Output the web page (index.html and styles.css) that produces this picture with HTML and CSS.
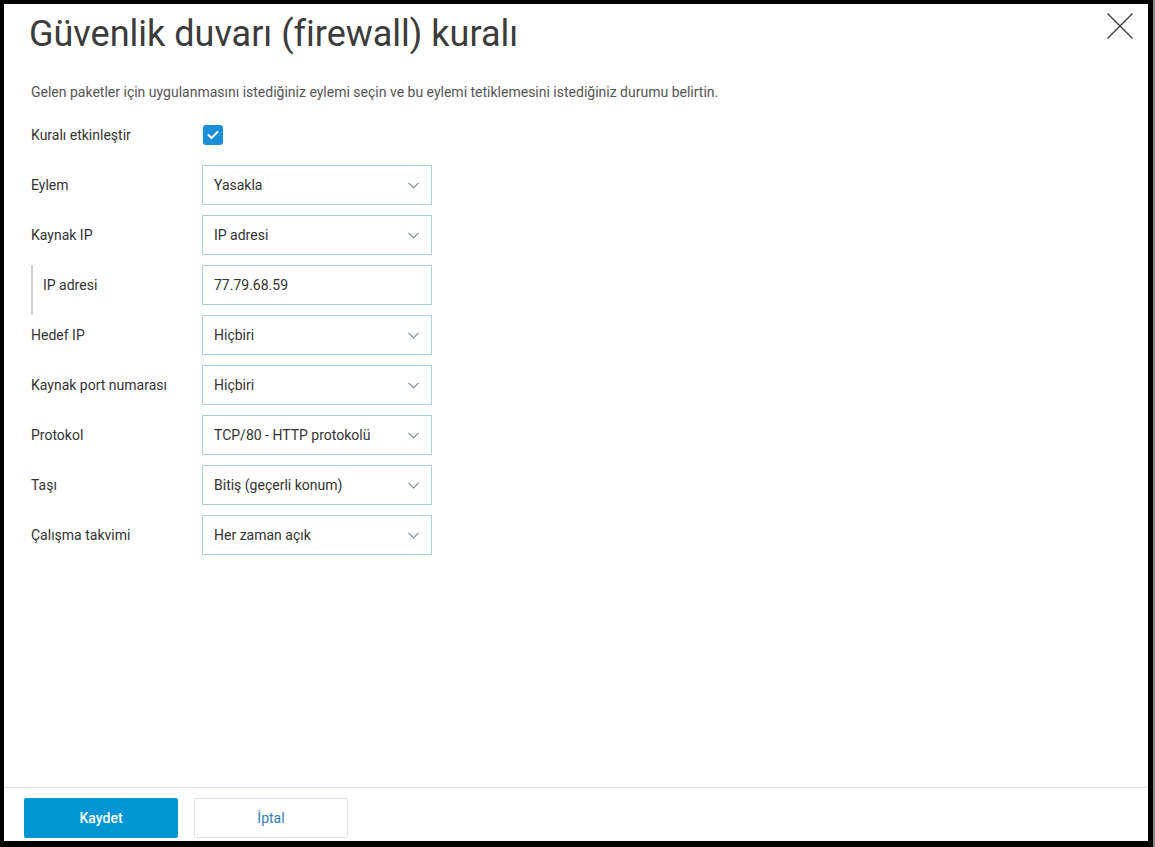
FILE: index.html
```html
<!DOCTYPE html>
<html lang="tr">
<head>
<meta charset="utf-8">
<title>Güvenlik duvarı (firewall) kuralı</title>
<link rel="stylesheet" href="styles.css">
</head>
<body>
<div class="dialog">
  <button class="close" aria-label="Kapat">
    <svg width="26" height="26" viewBox="0 0 26 26"><path d="M0.5 0.5 L25.5 25.5 M25.5 0.5 L0.5 25.5" stroke="#3a3a3a" stroke-width="1.3" fill="none"/></svg>
  </button>
  <div class="content">
    <h1 class="title">Güvenlik duvarı (firewall) kuralı</h1>
    <p class="desc">Gelen paketler için uygulanmasını istediğiniz eylemi seçin ve bu eylemi tetiklemesini istediğiniz durumu belirtin.</p>
    <div class="form">
      <div class="row">
        <div class="label">Kuralı etkinleştir</div>
        <div class="checkbox">
          <svg width="12" height="10" viewBox="0 0 12 10"><path d="M1.5 5 L4.5 8 L10.5 2" stroke="#fff" stroke-width="2" fill="none" stroke-linecap="round" stroke-linejoin="round"/></svg>
        </div>
      </div>
      <div class="row">
        <div class="label">Eylem</div>
        <div class="select"><span>Yasakla</span><svg class="chev" width="11" height="7" viewBox="0 0 11 7"><path d="M0.5 0.8 L5.5 5.8 L10.5 0.8" stroke="#7d8c99" stroke-width="1.2" fill="none"/></svg></div>
      </div>
      <div class="row">
        <div class="label">Kaynak IP</div>
        <div class="select"><span>IP adresi</span><svg class="chev" width="11" height="7" viewBox="0 0 11 7"><path d="M0.5 0.8 L5.5 5.8 L10.5 0.8" stroke="#7d8c99" stroke-width="1.2" fill="none"/></svg></div>
      </div>
      <div class="row sub">
        <div class="label">IP adresi</div>
        <div class="select input"><span>77.79.68.59</span></div>
      </div>
      <div class="row">
        <div class="label">Hedef IP</div>
        <div class="select"><span>Hiçbiri</span><svg class="chev" width="11" height="7" viewBox="0 0 11 7"><path d="M0.5 0.8 L5.5 5.8 L10.5 0.8" stroke="#7d8c99" stroke-width="1.2" fill="none"/></svg></div>
      </div>
      <div class="row">
        <div class="label">Kaynak port numarası</div>
        <div class="select"><span>Hiçbiri</span><svg class="chev" width="11" height="7" viewBox="0 0 11 7"><path d="M0.5 0.8 L5.5 5.8 L10.5 0.8" stroke="#7d8c99" stroke-width="1.2" fill="none"/></svg></div>
      </div>
      <div class="row">
        <div class="label">Protokol</div>
        <div class="select"><span>TCP/80 - HTTP protokolü</span><svg class="chev" width="11" height="7" viewBox="0 0 11 7"><path d="M0.5 0.8 L5.5 5.8 L10.5 0.8" stroke="#7d8c99" stroke-width="1.2" fill="none"/></svg></div>
      </div>
      <div class="row">
        <div class="label">Taşı</div>
        <div class="select"><span>Bitiş (geçerli konum)</span><svg class="chev" width="11" height="7" viewBox="0 0 11 7"><path d="M0.5 0.8 L5.5 5.8 L10.5 0.8" stroke="#7d8c99" stroke-width="1.2" fill="none"/></svg></div>
      </div>
      <div class="row">
        <div class="label">Çalışma takvimi</div>
        <div class="select"><span>Her zaman açık</span><svg class="chev" width="11" height="7" viewBox="0 0 11 7"><path d="M0.5 0.8 L5.5 5.8 L10.5 0.8" stroke="#7d8c99" stroke-width="1.2" fill="none"/></svg></div>
      </div>
    </div>
  </div>
  <div class="footer">
    <button class="btn primary">Kaydet</button>
    <button class="btn secondary">İptal</button>
  </div>
</div>
</body>
</html>
```
FILE: styles.css
```css
html {
  background: #000;
}
body {
  margin: 0;
  width: 1155px;
  height: 847px;
  box-sizing: border-box;
  padding: 4px 5px 6px 4px;
  border-right: 2px solid #8a8a8a;
  font-family: Roboto, "Liberation Sans", sans-serif;
  color: #333;
}
.dialog {
  position: relative;
  width: 1144px;
  height: 837px;
  background: #fff;
  display: flex;
  flex-direction: column;
}
.close {
  position: absolute;
  top: 9px;
  right: 15px;
  width: 26px;
  height: 26px;
  padding: 0;
  border: 0;
  background: none;
  cursor: pointer;
}
.close svg {
  display: block;
}
.content {
  flex: 1;
  padding: 8px 27px 0 27px;
}
.title {
  margin: 0 0 0 -2px;
  font-size: 36px;
  line-height: 44px;
  font-weight: 400;
  color: #3b3b3b;
}
.desc {
  margin: 26px 0 13px;
  font-size: 14px;
  line-height: 20px;
  color: #555;
}
.form {
  display: flex;
  flex-direction: column;
  gap: 10px;
}
.row {
  display: flex;
  align-items: center;
  height: 40px;
}
.label {
  width: 171px;
  flex: none;
  font-size: 14px;
  color: #333;
}
.row.sub {
  height: 50px;
  align-items: flex-start;
  margin-bottom: -10px;
}
.row.sub .label {
  align-self: stretch;
  border-left: 2px solid #cfcfcf;
  padding-left: 10px;
  width: 159px;
  line-height: 40px;
  box-sizing: content-box;
}
.checkbox {
  width: 20px;
  height: 20px;
  border-radius: 3px;
  background: #1a8fd8;
  display: flex;
  align-items: center;
  justify-content: center;
  margin-left: 1px;
}
.select {
  width: 230px;
  height: 40px;
  box-sizing: border-box;
  border: 1px solid #a9cfe0;
  padding: 0 11px;
  display: flex;
  align-items: center;
  justify-content: space-between;
  font-size: 14px;
  color: #333;
}
.chev {
  display: block;
  margin-right: 1px;
}
.footer {
  border-top: 1px solid #dfe4ea;
  padding: 10px 20px 3px;
  display: flex;
  gap: 16px;
}
.btn {
  width: 154px;
  height: 40px;
  font-family: Roboto, "Liberation Sans", sans-serif;
  font-size: 14px;
  border-radius: 2px;
  cursor: pointer;
}
.btn.primary {
  background: #0096d6;
  border: 0;
  color: #fff;
  font-weight: 500;
}
.btn.secondary {
  background: #fff;
  border: 1px solid #dde6ee;
  color: #2f7eb3;
}
```
